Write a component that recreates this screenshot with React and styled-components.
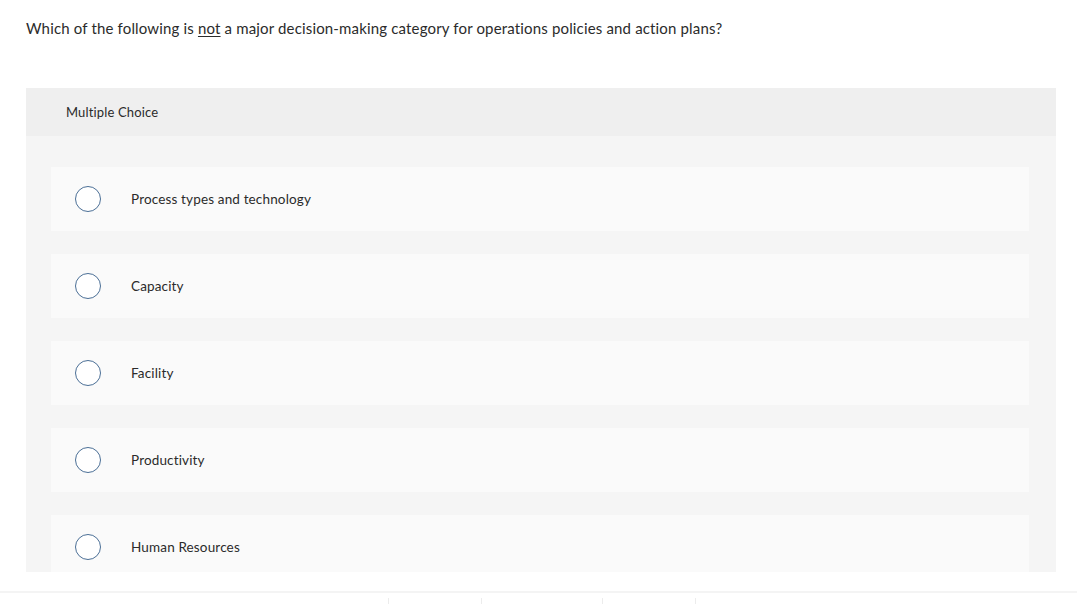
import React from "react";
import styled, { createGlobalStyle } from "styled-components";

const Global = createGlobalStyle`
  html, body { margin: 0; padding: 0; background: #ffffff; }
  body { font-family: "Lato", "Open Sans", "Liberation Sans", sans-serif; color: #2b2b2b; }
  * { box-sizing: border-box; }
`;

const Page = styled.div`
  width: 1077px;
  height: 604px;
  overflow: hidden;
  display: flex;
  flex-direction: column;
`;

const Question = styled.p`
  margin: 0;
  padding: 18px 26px 0 26px;
  font-size: 15px;
  letter-spacing: 0.16px;
  line-height: 20px;
  color: #2b2b2b;
  height: 88px;
  flex: none;
  u { text-decoration: underline; text-underline-offset: 2px; }
`;

const Panel = styled.section`
  margin: 0 21px 0 26px;
  height: 484px;
  flex: none;
  overflow: hidden;
  background: #f5f5f5;
  display: flex;
  flex-direction: column;
`;

const PanelHeader = styled.div`
  height: 48px;
  flex: none;
  background: #efefef;
  display: flex;
  align-items: center;
  padding-left: 40px;
  font-size: 13px;
  letter-spacing: 0.15px;
  color: #2b2b2b;
`;

const Options = styled.div`
  display: flex;
  flex-direction: column;
  gap: 23px;
  padding: 31px 27px 0 25px;
`;

const Option = styled.label`
  height: 64px;
  flex: none;
  background: #fafafa;
  display: flex;
  align-items: center;
  padding-left: 24px;
  gap: 30px;
  font-size: 13.5px;
  letter-spacing: 0.15px;
  color: #2b2b2b;
  cursor: pointer;
`;

const Radio = styled.span`
  width: 26px;
  height: 26px;
  border-radius: 50%;
  border: 1.5px solid #4b6f96;
  background: #ffffff;
  flex: none;
`;

const Footer = styled.div`
  margin-top: 19px;
  border-top: 2px solid #f4f4f4;
  flex: 1;
  display: flex;
  padding-left: 388px;
`;

const Tick = styled.span`
  width: 1px;
  height: 8px;
  margin-top: 5px;
  background: #ececec;
  margin-right: ${(p) => p.$gap}px;
`;

const items = [
  "Process types and technology",
  "Capacity",
  "Facility",
  "Productivity",
  "Human Resources",
];

export default function App() {
  return (
    <Page>
      <Global />
      <Question>
        Which of the following is <u>not</u> a major decision-making category for operations policies and action plans?
      </Question>
      <Panel>
        <PanelHeader>Multiple Choice</PanelHeader>
        <Options>
          {items.map((t) => (
            <Option key={t}>
              <Radio />
              {t}
            </Option>
          ))}
        </Options>
      </Panel>
      <Footer>
        <Tick $gap={92} />
        <Tick $gap={120} />
        <Tick $gap={92} />
        <Tick $gap={0} />
      </Footer>
    </Page>
  );
}
